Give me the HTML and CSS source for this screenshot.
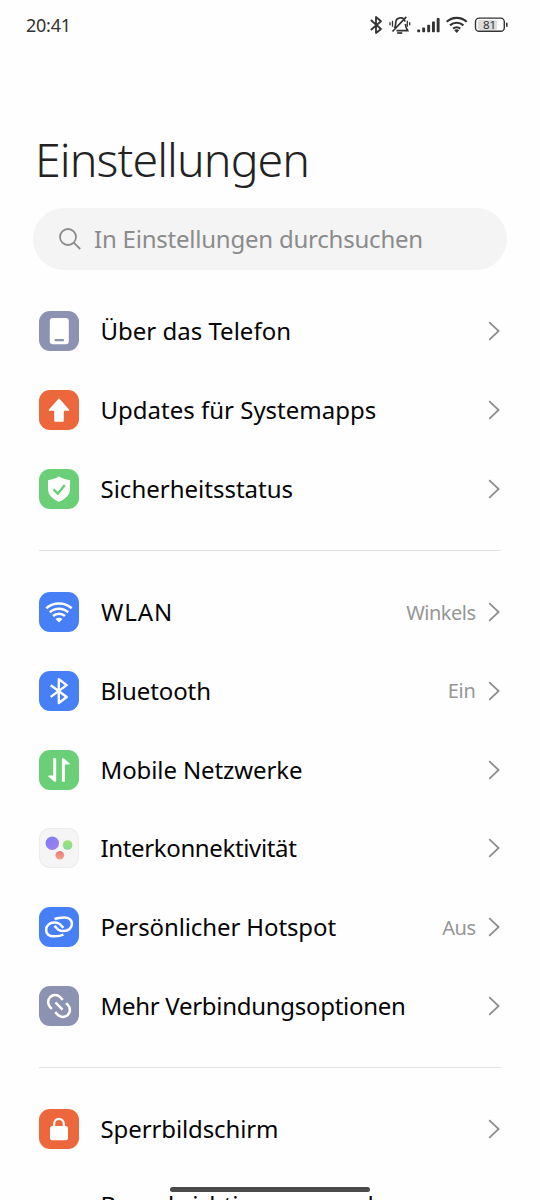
FILE: index.html
```
<!DOCTYPE html>
<html lang="de">
<head>
<meta charset="utf-8">
<title>Einstellungen</title>
<link rel="stylesheet" href="styles.css">
</head>
<body>
<svg class="defs" width="0" height="0" aria-hidden="true">
  <symbol id="chevron" viewBox="0 0 14 22"><path d="M2.2 2.2 11.6 11 2.2 19.8" fill="none" stroke="#8e8e8e" stroke-width="1.8"/></symbol>
  <linearGradient id="violet" x1="0" y1="0" x2="1" y2="1"><stop offset="0" stop-color="#7a7af5"/><stop offset="1" stop-color="#a382ee"/></linearGradient>
  <linearGradient id="lime" x1="0" y1="0" x2="0" y2="1"><stop offset="0" stop-color="#a5e070"/><stop offset="1" stop-color="#7fdc98"/></linearGradient>
  <linearGradient id="coral" x1="0" y1="0" x2="0" y2="1"><stop offset="0" stop-color="#e97979"/><stop offset="1" stop-color="#f5a284"/></linearGradient>
</svg>
<div class="screen">
  <header class="status">
    <span class="time">20:41</span>
    <svg class="indicators" width="142" height="24" viewBox="368 13 142 24" fill="none" stroke="#333" stroke-width="1.8">
      <path d="M370.8 20 381 29 376 33V17l5 4.2-10.2 8.8" stroke-linejoin="round"/>
      <path d="M394.3 28.3c1-1.2 1.4-2.3 1.4-5.3 0-6 8.3-7.2 9.3-1.4M405.4 24c.1 3.2 1 4.2 2.3 6.6H396.5M406.3 16.8 392.5 31.5" stroke-width="1.7"/>
      <path d="M397.2 33h5" stroke-width="1.7"/>
      <path d="M392.5 20.7v6M390 22.2v3M407.3 20.7v6M409.7 22.2v3" stroke-width="1.3"/>
      <g fill="#333" stroke="none">
        <rect x="417.2" y="29.5" width="2.9" height="2.7" rx=".8"/>
        <rect x="422.2" y="27.6" width="2.9" height="4.6" rx=".8"/>
        <rect x="427.2" y="24.7" width="2.9" height="7.5" rx=".8"/>
        <rect x="432" y="21.6" width="2.9" height="10.6" rx=".8"/>
        <rect x="436.7" y="18" width="2.9" height="14.2" rx=".8"/>
      </g>
      <path d="M446.7 21.8a14.6 14.6 0 0 1 20 0M450 25.4a9.8 9.8 0 0 1 13.4 0M453.2 28.6a5.2 5.2 0 0 1 7 0" stroke-width="2.2"/>
      <path d="M454.2 30.2 456.7 33l2.5-2.8a4 4 0 0 0-5 0z" fill="#333" stroke="none"/>
      <rect x="478" y="20" width="19" height="10" rx="2" fill="#dcdcdc" stroke="none"/>
      <rect x="475.5" y="18.1" width="28.8" height="13.2" rx="3.6" stroke-width="1.4"/>
      <path d="M506.8 22.8v4" stroke-width="1.6"/>
      <text class="charge" x="489.5" y="29">81</text>
    </svg>
  </header>

  <h1 class="title">Einstellungen</h1>

  <div class="search">
    <svg width="24" height="24" viewBox="0 0 24 24" fill="none" stroke="#8b8b8b" stroke-width="1.8"><circle cx="10" cy="10" r="8"/><path d="m15.7 15.7 6.5 6.3"/></svg>
    <span class="hint">In Einstellungen durchsuchen</span>
  </div>

  <ul class="group">
    <li class="row">
      <svg class="icon slate" viewBox="0 0 40 40"><rect x="10.8" y="7" width="19" height="26.2" rx="3" fill="#fff"/><rect x="15.7" y="28" width="9.2" height="2.3" rx=".6" fill="#8c92b2"/></svg>
      <span class="label">Über das Telefon</span>
      <svg class="chevron"><use href="#chevron"/></svg>
    </li>
    <li class="row">
      <svg class="icon orange" viewBox="0 0 40 40"><path d="M20 8.3 30.2 19.8q.5.9-.5.9H24.8V30.7q0 1-1 1h-7.6q-1 0-1-1V20.7H10.3q-1 0-.5-.9z" fill="#fff"/></svg>
      <span class="label">Updates für Systemapps</span>
      <svg class="chevron"><use href="#chevron"/></svg>
    </li>
    <li class="row">
      <svg class="icon green" viewBox="0 0 40 40"><path d="M20 7.3c3.2 2.2 6.5 3.2 11 4V20c0 6-4.5 10-11 12.8C13.5 30 9 26 9 20v-8.7c4.5-.8 7.8-1.8 11-4z" fill="#fff"/><path d="m14.6 20.3 4.2 4.4 7-8.7" fill="none" stroke="#6bcf77" stroke-width="2.5"/></svg>
      <span class="label">Sicherheitsstatus</span>
      <svg class="chevron"><use href="#chevron"/></svg>
    </li>
  </ul>

  <ul class="group">
    <li class="row">
      <svg class="icon blue" viewBox="0 0 40 40" fill="none" stroke="#fff" stroke-width="2.5"><path d="M7.3 16.3c7.4-6.3 18-6.3 25.4 0M10.8 20.2c5.3-4.7 13.1-4.7 18.4 0M14 24c3.5-3.1 8.5-3.1 12 0"/><path d="M16.5 27c2-1.7 5-1.7 7 0L20 30.4z" fill="#fff" stroke="none"/></svg>
      <span class="label caps">WLAN</span>
      <span class="value">Winkels</span>
      <svg class="chevron"><use href="#chevron"/></svg>
    </li>
    <li class="row">
      <svg class="icon blue" viewBox="0 0 40 40"><path d="m11.7 14.2 16 11.8-7.9 6V8.2l7.9 5.9-16 11.8" fill="none" stroke="#fff" stroke-width="2.4" stroke-linejoin="round"/></svg>
      <span class="label tight-1">Bluetooth</span>
      <span class="value plain">Ein</span>
      <svg class="chevron"><use href="#chevron"/></svg>
    </li>
    <li class="row">
      <svg class="icon green" viewBox="0 0 40 40" fill="#fff"><path d="M14.2 8.3h3V31q0 .8-.8.8h-.9L9.3 26.5q-.5-1 .6-1h4.3z"/><path d="M25.9 31.7h-3V9q0-.8.8-.8h.9l6.2 5.3q.5 1-.6 1h-4.3z"/></svg>
      <span class="label tight-1">Mobile Netzwerke</span>
      <svg class="chevron"><use href="#chevron"/></svg>
    </li>
    <li class="row">
      <svg class="icon pale" viewBox="0 0 40 40"><circle cx="13.3" cy="15.2" r="6.7" fill="url(#violet)"/><circle cx="28.6" cy="17" r="4.8" fill="url(#lime)"/><circle cx="20.8" cy="27.2" r="4.3" fill="url(#coral)"/></svg>
      <span class="label tight-3">Interkonnektivität</span>
      <svg class="chevron"><use href="#chevron"/></svg>
    </li>
    <li class="row">
      <svg class="icon blue" viewBox="0 0 40 40" fill="none" stroke="#fff" stroke-width="2.5"><path d="M15.6 12.2C18.5 10.5 21 10.4 25.4 10.4c4.8 0 7.5 2.8 7.5 6.4 0 4.2-3.5 7.3-8 7.3-5 0-6-1.4-9.3-5.3"/><path d="M24.4 27.5C21.5 29.2 19 29.3 14.6 29.3c-4.8 0-7.5-2.8-7.5-6.4 0-4.2 3.5-7.3 8-7.3 5 0 6 1.4 9.3 5.3"/></svg>
      <span class="label tight-1">Persönlicher Hotspot</span>
      <span class="value">Aus</span>
      <svg class="chevron"><use href="#chevron"/></svg>
    </li>
    <li class="row">
      <svg class="icon slate" viewBox="0 0 40 40" fill="none" stroke="#fff" stroke-width="2.5"><g transform="rotate(45 20 20)"><path d="M18.4 13h-3.9a7 7 0 0 0 0 14H17M21.6 27h3.9a7 7 0 0 0 0-14H23M15 20h10"/></g></svg>
      <span class="label tight-2">Mehr Verbindungsoptionen</span>
      <svg class="chevron"><use href="#chevron"/></svg>
    </li>
  </ul>

  <ul class="group">
    <li class="row">
      <svg class="icon orange" viewBox="0 0 40 40"><rect x="11" y="17" width="18" height="14.3" rx="2.5" fill="#fff"/><path d="M15.2 18v-3.4a4.8 4.8 0 0 1 9.6 0V18" fill="none" stroke="#fff" stroke-width="2.2"/></svg>
      <span class="label tight-1">Sperrbildschirm</span>
      <svg class="chevron"><use href="#chevron"/></svg>
    </li>
    <li class="row textonly">
      <span class="label tight-2">Benachrichtigungen und</span>
    </li>
  </ul>
  <div class="home-bar"></div>
</div>
</body>
</html>
```
FILE: styles.css
```
* { box-sizing: border-box; }

body {
  margin: 0;
  background: #fefefe;
  color: #050505;
  font-family: "Noto Sans", sans-serif;
}

.defs { position: absolute; }

.screen {
  position: relative;
  display: flex;
  flex-direction: column;
  width: 540px;
  height: 1200px;
  overflow: hidden;
}

.screen > * { flex-shrink: 0; }

.status {
  display: flex;
  justify-content: space-between;
  align-items: center;
  height: 50px;
  padding: 0 30px 0 26px;
}

.time {
  color: #333;
  font-size: 18px;
  font-weight: 430;
  letter-spacing: -0.25px;
}

.charge {
  fill: #333;
  stroke: none;
  font-size: 11.5px;
  font-weight: 450;
  text-anchor: middle;
}

.title {
  margin: 77px 0 0 35px;
  height: 64px;
  color: #222;
  font-size: 46.5px;
  font-weight: 280;
  line-height: 64px;
  letter-spacing: -0.9px;
}

.search {
  display: flex;
  align-items: center;
  gap: 12px;
  margin: 17px 33px 22.1px;
  height: 62px;
  padding-left: 25px;
  border-radius: 31px;
  background: #f4f4f4;
}

.hint {
  padding-bottom: 1px;
  color: #8b8b8b;
  font-size: 24px;
  letter-spacing: -0.22px;
}

.group {
  margin: 0;
  padding: 0;
  list-style: none;
}

.group + .group::before {
  content: "";
  display: block;
  height: 1px;
  margin: 21.6px 39px;
  background: #e2e2e2;
}

.row {
  display: flex;
  align-items: center;
  height: 78.8px;
  padding: 0 39.5px 0 39px;
}

.icon {
  width: 40px;
  height: 40px;
  border-radius: 11px;
}

.slate { background: #8c92b2; }
.orange { background: #ec683c; }
.green { background: #6bcf77; }
.blue { background: #477ff7; }
.pale { background: #f5f5f5; box-shadow: inset 0 0 0 1px #ededed; }

.label {
  flex: 1;
  margin-left: 21.5px;
  font-size: 24px;
  line-height: 34px;
  white-space: nowrap;
}

.textonly .label {
  margin-left: 61.5px;
  padding-bottom: 6px;
}

.caps { padding-left: 0.5px; letter-spacing: 0.9px; }
.tight-1 { letter-spacing: -0.11px; }
.tight-2 { letter-spacing: -0.29px; }
.tight-3 { letter-spacing: -0.36px; }

.value {
  margin-right: 11px;
  color: #969696;
  font-size: 20px;
  font-weight: 380;
  letter-spacing: -0.5px;
}

.plain { letter-spacing: -0.3px; }

.chevron {
  width: 14px;
  height: 22px;
}

.home-bar {
  position: absolute;
  left: 170px;
  top: 1187px;
  width: 200px;
  height: 5px;
  border-radius: 3px;
  background: #4a4a4a;
}
```
